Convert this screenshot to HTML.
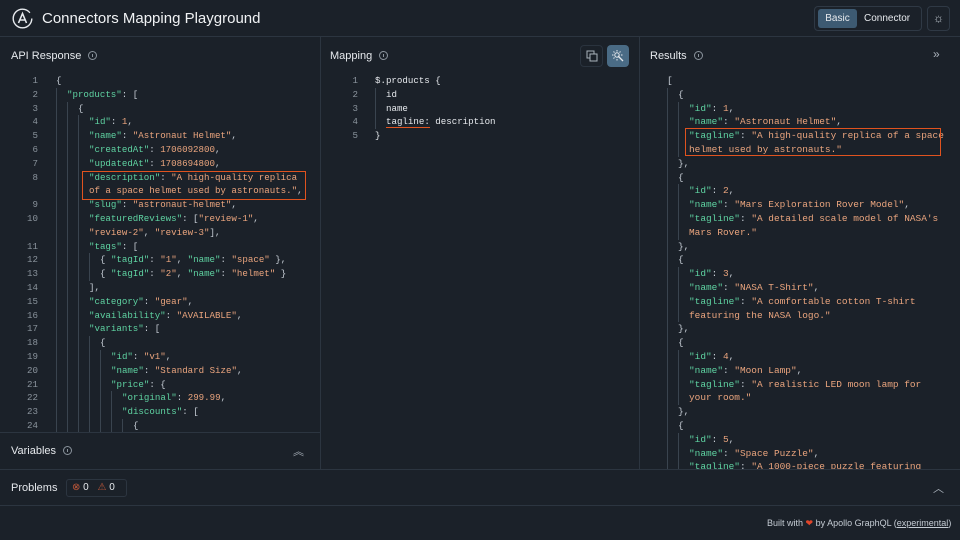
<!DOCTYPE html>
<html><head><meta charset="utf-8"><style>
*{box-sizing:border-box;margin:0;padding:0}
body{width:960px;height:540px;background:#1b2129;color:#e6e9ed;font-family:"Liberation Sans",sans-serif;position:relative;overflow:hidden}
.abs{position:absolute}
.hdr{left:0;top:0;width:960px;height:37px;border-bottom:1px solid #2c3540}
.title{left:42px;top:10px;font-size:15px;color:#f0f2f4}
.ptitle{font-size:11px;color:#e6e9ed}
.info{display:inline-block;width:9px;height:9px;border:1px solid #8a939c;border-radius:50%;margin-left:7px;vertical-align:-1px;position:relative}
.info:after{content:"";position:absolute;left:3px;top:2px;width:1px;height:3px;background:#8a939c}
.code{font-family:"Liberation Mono",monospace;font-size:9.15px;line-height:13.8px;white-space:normal}
.ln{color:#8a939c;text-align:right;width:20px;position:absolute;white-space:pre}
.l{height:13.8px;position:relative;white-space:pre}
.g{display:inline-block;width:11px;height:13.8px;border-left:1px solid #3a444f;vertical-align:top}
.k{color:#5fd3a2}.s{color:#eba57e}.p{color:#c5ccd4}
.vl{background:#2c3540}
</style></head><body>
<div class="abs hdr"></div>
<svg class="abs" style="left:12px;top:8px" width="21" height="21" viewBox="0 0 21 21"><circle cx="10.5" cy="10.5" r="9.3" fill="none" stroke="#e6e9ed" stroke-width="1.4" stroke-dasharray="52 6"/><path d="M6.5 15 L10.5 5.5 L14.5 15 M8 12 H13" fill="none" stroke="#e6e9ed" stroke-width="1.6"/></svg>
<div class="abs title">Connectors Mapping Playground</div>
<div class="abs" style="left:814px;top:6px;width:108px;height:25px;border:1px solid #2f3945;border-radius:4px"></div>
<div class="abs" style="left:818px;top:9px;width:39px;height:19px;background:#3d5a72;border-radius:3px;font-size:10px;text-align:center;line-height:19px">Basic</div>
<div class="abs" style="left:864px;top:9px;font-size:10px;line-height:19px">Connector</div>
<div class="abs" style="left:927px;top:6px;width:23px;height:25px;border:1px solid #2f3945;border-radius:4px;text-align:center;line-height:23px;font-size:12px;color:#c5ccd4">☼</div>

<div class="abs vl" style="left:320px;top:37px;width:1px;height:433px"></div>
<div class="abs vl" style="left:639px;top:37px;width:1px;height:433px"></div>
<div class="abs vl" style="left:0;top:432px;width:320px;height:1px"></div>
<div class="abs vl" style="left:0;top:469px;width:960px;height:1px"></div>
<div class="abs vl" style="left:0;top:505px;width:960px;height:1px"></div>

<div class="abs ptitle" style="left:11px;top:50px">API Response<span class="info"></span></div>
<div class="abs ptitle" style="left:330px;top:50px">Mapping<span class="info"></span></div>
<div class="abs ptitle" style="left:650px;top:50px">Results<span class="info"></span></div>
<div class="abs" style="left:933px;top:47px;font-size:12px;color:#aab2bb">»</div>
<div class="abs" style="left:580px;top:45px;width:23px;height:22px;border:1px solid #2a333e;border-radius:4px"></div>
<svg class="abs" style="left:586px;top:50px" width="12" height="12"><rect x="1" y="1" width="7" height="7" fill="none" stroke="#aab2bb"/><rect x="4" y="4" width="7" height="7" fill="#1b2129" stroke="#aab2bb"/></svg>
<div class="abs" style="left:607px;top:45px;width:22px;height:22px;background:#4a6b85;border-radius:4px"></div>
<svg class="abs" style="left:611px;top:49px" width="14" height="14"><path d="M7 7 L12 12" stroke="#e6e9ed" stroke-width="1.3"/><circle cx="6" cy="6" r="2.2" fill="none" stroke="#e6e9ed"/><path d="M6 1v1.5M6 10v1.5M1 6h1.5M10 6h1.5M2.5 2.5l1 1M9.5 2.5l-1 1M2.5 9.5l1-1" stroke="#e6e9ed"/></svg>

<!-- left code -->
<div class="abs code" style="left:0;top:74px;width:320px;height:358px;overflow:hidden">
<div class="ln" style="left:18px;top:0">1
2
3
4
5
6
7
8

9
10

11
12
13
14
15
16
17
18
19
20
21
22
23
24</div>
<div style="position:absolute;left:56px;top:0">
<div class="l"><span class="p">{</span></div>
<div class="l"><i class="g"></i><span class="k">"products"</span><span class="p">: [</span></div>
<div class="l"><i class="g"></i><i class="g"></i><span class="p">{</span></div>
<div class="l"><i class="g"></i><i class="g"></i><i class="g"></i><span class="k">"id"</span><span class="p">: </span><span class="s">1</span><span class="p">,</span></div>
<div class="l"><i class="g"></i><i class="g"></i><i class="g"></i><span class="k">"name"</span><span class="p">: </span><span class="s">"Astronaut Helmet"</span><span class="p">,</span></div>
<div class="l"><i class="g"></i><i class="g"></i><i class="g"></i><span class="k">"createdAt"</span><span class="p">: </span><span class="s">1706092800</span><span class="p">,</span></div>
<div class="l"><i class="g"></i><i class="g"></i><i class="g"></i><span class="k">"updatedAt"</span><span class="p">: </span><span class="s">1708694800</span><span class="p">,</span></div>
<div class="l"><i class="g"></i><i class="g"></i><i class="g"></i><span class="k">"description"</span><span class="p">: </span><span class="s">"A high-quality replica</span></div>
<div class="l"><i class="g"></i><i class="g"></i><i class="g"></i><span class="s">of a space helmet used by astronauts."</span><span class="p">,</span></div>
<div class="l"><i class="g"></i><i class="g"></i><i class="g"></i><span class="k">"slug"</span><span class="p">: </span><span class="s">"astronaut-helmet"</span><span class="p">,</span></div>
<div class="l"><i class="g"></i><i class="g"></i><i class="g"></i><span class="k">"featuredReviews"</span><span class="p">: [</span><span class="s">"review-1"</span><span class="p">,</span></div>
<div class="l"><i class="g"></i><i class="g"></i><i class="g"></i><span class="s">"review-2"</span><span class="p">, </span><span class="s">"review-3"</span><span class="p">],</span></div>
<div class="l"><i class="g"></i><i class="g"></i><i class="g"></i><span class="k">"tags"</span><span class="p">: [</span></div>
<div class="l"><i class="g"></i><i class="g"></i><i class="g"></i><i class="g"></i><span class="p">{ </span><span class="k">"tagId"</span><span class="p">: </span><span class="s">"1"</span><span class="p">, </span><span class="k">"name"</span><span class="p">: </span><span class="s">"space"</span><span class="p"> },</span></div>
<div class="l"><i class="g"></i><i class="g"></i><i class="g"></i><i class="g"></i><span class="p">{ </span><span class="k">"tagId"</span><span class="p">: </span><span class="s">"2"</span><span class="p">, </span><span class="k">"name"</span><span class="p">: </span><span class="s">"helmet"</span><span class="p"> }</span></div>
<div class="l"><i class="g"></i><i class="g"></i><i class="g"></i><span class="p">],</span></div>
<div class="l"><i class="g"></i><i class="g"></i><i class="g"></i><span class="k">"category"</span><span class="p">: </span><span class="s">"gear"</span><span class="p">,</span></div>
<div class="l"><i class="g"></i><i class="g"></i><i class="g"></i><span class="k">"availability"</span><span class="p">: </span><span class="s">"AVAILABLE"</span><span class="p">,</span></div>
<div class="l"><i class="g"></i><i class="g"></i><i class="g"></i><span class="k">"variants"</span><span class="p">: [</span></div>
<div class="l"><i class="g"></i><i class="g"></i><i class="g"></i><i class="g"></i><span class="p">{</span></div>
<div class="l"><i class="g"></i><i class="g"></i><i class="g"></i><i class="g"></i><i class="g"></i><span class="k">"id"</span><span class="p">: </span><span class="s">"v1"</span><span class="p">,</span></div>
<div class="l"><i class="g"></i><i class="g"></i><i class="g"></i><i class="g"></i><i class="g"></i><span class="k">"name"</span><span class="p">: </span><span class="s">"Standard Size"</span><span class="p">,</span></div>
<div class="l"><i class="g"></i><i class="g"></i><i class="g"></i><i class="g"></i><i class="g"></i><span class="k">"price"</span><span class="p">: {</span></div>
<div class="l"><i class="g"></i><i class="g"></i><i class="g"></i><i class="g"></i><i class="g"></i><i class="g"></i><span class="k">"original"</span><span class="p">: </span><span class="s">299.99</span><span class="p">,</span></div>
<div class="l"><i class="g"></i><i class="g"></i><i class="g"></i><i class="g"></i><i class="g"></i><i class="g"></i><span class="k">"discounts"</span><span class="p">: [</span></div>
<div class="l"><i class="g"></i><i class="g"></i><i class="g"></i><i class="g"></i><i class="g"></i><i class="g"></i><i class="g"></i><span class="p">{</span></div>
</div>
</div>
<div class="abs" style="left:82px;top:171px;width:224px;height:29px;border:1.5px solid #e0531f"></div>

<!-- mapping -->
<div class="abs code" style="left:320px;top:74px">
<div class="ln" style="left:18px;top:0">1
2
3
4
5</div>
<div style="position:absolute;left:55px;top:0;width:250px">
<div class="l"><span>$.products {</span></div>
<div class="l"><i class="g"></i><span>id</span></div>
<div class="l"><i class="g"></i><span>name</span></div>
<div class="l"><i class="g"></i><span style="border-bottom:1.5px solid #e0531f;color:#e6e9ed">tagline:</span><span> description</span></div>
<div class="l"><span>}</span></div>
</div>
</div>

<!-- results -->
<div class="abs code" style="left:667px;top:74px;height:395px;width:290px;overflow:hidden;font-size:9.45px">
<div class="l"><span class="p">[</span></div>
<div class="l"><i class="g"></i><span class="p">{</span></div>
<div class="l"><i class="g"></i><i class="g"></i><span class="k">"id"</span><span class="p">: </span><span class="s">1</span><span class="p">,</span></div>
<div class="l"><i class="g"></i><i class="g"></i><span class="k">"name"</span><span class="p">: </span><span class="s">"Astronaut Helmet"</span><span class="p">,</span></div>
<div class="l"><i class="g"></i><i class="g"></i><span class="k">"tagline"</span><span class="p">: </span><span class="s">"A high-quality replica of a space</span></div>
<div class="l"><i class="g"></i><i class="g"></i><span class="s">helmet used by astronauts."</span></div>
<div class="l"><i class="g"></i><span class="p">},</span></div>
<div class="l"><i class="g"></i><span class="p">{</span></div>
<div class="l"><i class="g"></i><i class="g"></i><span class="k">"id"</span><span class="p">: </span><span class="s">2</span><span class="p">,</span></div>
<div class="l"><i class="g"></i><i class="g"></i><span class="k">"name"</span><span class="p">: </span><span class="s">"Mars Exploration Rover Model"</span><span class="p">,</span></div>
<div class="l"><i class="g"></i><i class="g"></i><span class="k">"tagline"</span><span class="p">: </span><span class="s">"A detailed scale model of NASA's</span></div>
<div class="l"><i class="g"></i><i class="g"></i><span class="s">Mars Rover."</span></div>
<div class="l"><i class="g"></i><span class="p">},</span></div>
<div class="l"><i class="g"></i><span class="p">{</span></div>
<div class="l"><i class="g"></i><i class="g"></i><span class="k">"id"</span><span class="p">: </span><span class="s">3</span><span class="p">,</span></div>
<div class="l"><i class="g"></i><i class="g"></i><span class="k">"name"</span><span class="p">: </span><span class="s">"NASA T-Shirt"</span><span class="p">,</span></div>
<div class="l"><i class="g"></i><i class="g"></i><span class="k">"tagline"</span><span class="p">: </span><span class="s">"A comfortable cotton T-shirt</span></div>
<div class="l"><i class="g"></i><i class="g"></i><span class="s">featuring the NASA logo."</span></div>
<div class="l"><i class="g"></i><span class="p">},</span></div>
<div class="l"><i class="g"></i><span class="p">{</span></div>
<div class="l"><i class="g"></i><i class="g"></i><span class="k">"id"</span><span class="p">: </span><span class="s">4</span><span class="p">,</span></div>
<div class="l"><i class="g"></i><i class="g"></i><span class="k">"name"</span><span class="p">: </span><span class="s">"Moon Lamp"</span><span class="p">,</span></div>
<div class="l"><i class="g"></i><i class="g"></i><span class="k">"tagline"</span><span class="p">: </span><span class="s">"A realistic LED moon lamp for</span></div>
<div class="l"><i class="g"></i><i class="g"></i><span class="s">your room."</span></div>
<div class="l"><i class="g"></i><span class="p">},</span></div>
<div class="l"><i class="g"></i><span class="p">{</span></div>
<div class="l"><i class="g"></i><i class="g"></i><span class="k">"id"</span><span class="p">: </span><span class="s">5</span><span class="p">,</span></div>
<div class="l"><i class="g"></i><i class="g"></i><span class="k">"name"</span><span class="p">: </span><span class="s">"Space Puzzle"</span><span class="p">,</span></div>
<div class="l"><i class="g"></i><i class="g"></i><span class="k">"tagline"</span><span class="p">: </span><span class="s">"A 1000-piece puzzle featuring</span></div>
</div>
<div class="abs" style="left:685px;top:128px;width:256px;height:28px;border:1.5px solid #e0531f"></div>

<div class="abs ptitle" style="left:11px;top:445px">Variables<span class="info"></span></div>
<div class="abs" style="left:293px;top:443px;font-size:11px;color:#aab2bb">︽</div>
<div class="abs ptitle" style="left:11px;top:482px">Problems</div>
<div class="abs" style="left:66px;top:479px;width:61px;height:18px;border:1px solid #2c3540;border-radius:3px;font-size:10px;line-height:16px"><span style="color:#c0583a;margin-left:5px">⊗</span> 0 <span style="color:#c0583a;margin-left:6px">⚠</span> 0</div>
<div class="abs" style="left:933px;top:480px;font-size:11px;color:#aab2bb">︿</div>
<div class="abs" style="left:767px;top:518px;font-size:9px;color:#c5ccd4">Built with <span style="color:#e0452a">❤</span> by Apollo GraphQL (<u>experimental</u>)</div>
</body></html>
